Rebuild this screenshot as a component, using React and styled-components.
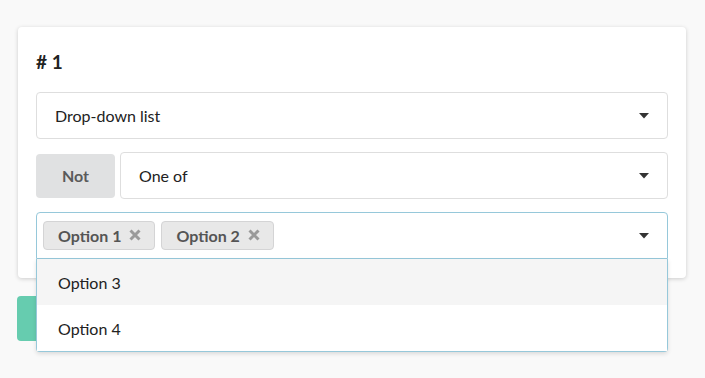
import React from "react";
import styled, { createGlobalStyle } from "styled-components";

const Global = createGlobalStyle`
  html, body { margin: 0; padding: 0; background: #f9f9f9; }
  body { font-family: Lato, "Noto Sans", sans-serif; color: #222; }
  * { box-sizing: border-box; }
`;

const Page = styled.div`
  padding: 27px 19px 0 18px;
  width: 705px;
  height: 378px;
`;

const Card = styled.div`
  background: #fff;
  border-radius: 4px;
  box-shadow: 0 1px 4px rgba(0, 0, 0, 0.18);
  padding: 18px 18px 19px;
  display: flex;
  flex-direction: column;
  gap: 13px;
`;

const Heading = styled.h3`
  margin: 2px 0 2px;
  font-size: 19px;
  font-weight: 700;
  line-height: 30px;
  color: #222;
`;

const Stack = styled.div`
  display: flex;
  flex-direction: column;
  gap: 13px;
`;

const Row = styled.div`
  display: flex;
  align-items: center;
  gap: 5px;
`;

const Select = styled.div`
  position: relative;
  flex: 1 0 auto;
  height: 47px;
  display: flex;
  align-items: center;
  gap: 6px;
  padding: 0 40px 0 ${(p) => (p.$multi ? "6px" : "18px")};
  border: 1px solid ${(p) => (p.$active ? "#96c8da" : "#dedede")};
  border-radius: ${(p) => (p.$active ? "4px 4px 0 0" : "4px")};
  background: #fff;
  font-size: 16px;
  color: #222;
`;

const Caret = styled.svg`
  position: absolute;
  right: 18px;
  top: 50%;
  margin-top: -3px;
`;

const NotButton = styled.button`
  flex: none;
  width: 79px;
  height: 44px;
  border: none;
  border-radius: 4px;
  background: #e0e1e2;
  color: #5a5a5a;
  font-family: inherit;
  font-size: 16px;
  font-weight: 700;
  padding: 0;
`;

const Tag = styled.span`
  display: inline-flex;
  align-items: center;
  gap: 8px;
  height: 29px;
  margin-top: -1px;
  padding: 0 13px 0 14px;
  background: #e8e8e8;
  border: 1px solid #d4d4d5;
  border-radius: 4px;
  font-size: 16px;
  font-weight: 700;
  color: #555;
`;

const Menu = styled.div`
  position: absolute;
  left: -1px;
  right: -1px;
  top: 46px;
  background: #fff;
  border: 1px solid #96c8da;
  border-top: none;
  border-radius: 0 0 4px 4px;
  box-shadow: 0 2px 4px rgba(0, 0, 0, 0.12);
  z-index: 2;
`;

const Item = styled.div`
  height: 46px;
  display: flex;
  align-items: center;
  padding-left: 21px;
  font-size: 16px;
  color: #222;
  background: ${(p) => (p.$hover ? "#f5f5f5" : "#fff")};
`;

const SaveButton = styled.button`
  display: block;
  margin-top: 18px;
  width: 120px;
  height: 45px;
  border: none;
  border-radius: 4px;
  background: #66ccaf;
  margin-left: -1px;
`;

function CaretIcon() {
  return (
    <Caret width="10" height="6" viewBox="0 0 10 6">
      <path d="M0 0 H10 L5 5.5 Z" fill="#333" />
    </Caret>
  );
}

function Cross() {
  return (
    <svg width="12" height="12" viewBox="0 0 12 12">
      <path d="M1.5 1.5 L10.5 10.5 M10.5 1.5 L1.5 10.5" stroke="#9a9a9a" strokeWidth="3" strokeLinecap="butt" />
    </svg>
  );
}

export default function App() {
  return (
    <Page>
      <Global />
      <Card>
        <Heading># 1</Heading>
        <Stack>
          <Select>
            Drop-down list
            <CaretIcon />
          </Select>
          <Row>
            <NotButton>Not</NotButton>
            <Select>
              One of
              <CaretIcon />
            </Select>
          </Row>
          <Select $multi $active>
            <Tag>
              Option 1 <Cross />
            </Tag>
            <Tag>
              Option 2 <Cross />
            </Tag>
            <CaretIcon />
            <Menu>
              <Item $hover>Option 3</Item>
              <Item>Option 4</Item>
            </Menu>
          </Select>
        </Stack>
      </Card>
      <SaveButton />
    </Page>
  );
}
